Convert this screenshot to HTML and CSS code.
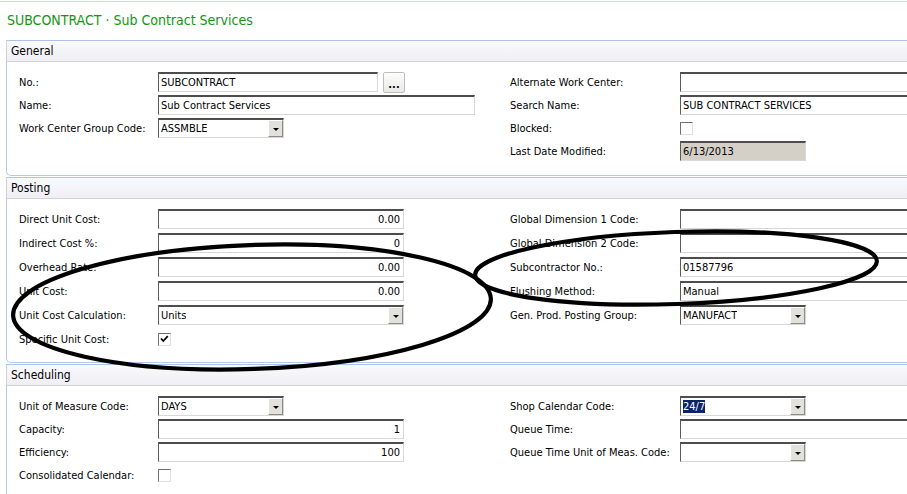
FILE: index.html
```html
<!DOCTYPE html>
<html>
<head>
<meta charset="utf-8">
<title>SUBCONTRACT · Sub Contract Services</title>
<link rel="stylesheet" href="styles.css">
</head>
<body>
<div class="page">
  <div class="topline"></div>
  <h1 class="title">SUBCONTRACT · Sub Contract Services</h1>

  <section class="fasttab general">
    <div class="tab-head">General</div>
    <div class="tab-body">
      <div class="col">
        <label>No.:</label>
        <div class="field"><span class="input w220">SUBCONTRACT</span><span class="assist">...</span></div>
        <label>Name:</label>
        <span class="input w317">Sub Contract Services</span>
        <label>Work Center Group Code:</label>
        <span class="input select w126"><span class="val">ASSMBLE</span><span class="drop"></span></span>
      </div>
      <div class="col col-right">
        <label>Alternate Work Center:</label>
        <span class="input wide"></span>
        <label>Search Name:</label>
        <span class="input wide">SUB CONTRACT SERVICES</span>
        <label>Blocked:</label>
        <span class="check"></span>
        <label>Last Date Modified:</label>
        <span class="input readonly w126">6/13/2013</span>
      </div>
    </div>
  </section>

  <section class="fasttab posting">
    <div class="tab-head">Posting</div>
    <div class="tab-body">
      <div class="col">
        <label>Direct Unit Cost:</label>
        <span class="input num w246">0.00</span>
        <label>Indirect Cost %:</label>
        <span class="input num w246">0</span>
        <label>Overhead Rate:</label>
        <span class="input num w246">0.00</span>
        <label>Unit Cost:</label>
        <span class="input num w246">0.00</span>
        <label>Unit Cost Calculation:</label>
        <span class="input select w246"><span class="val">Units</span><span class="drop"></span></span>
        <label>Specific Unit Cost:</label>
        <span class="check"><svg width="11" height="11" viewBox="0 0 11 11"><path d="M2 4.5 L4.3 7 L8.8 2.2" fill="none" stroke="#000" stroke-width="1.8"/></svg></span>
      </div>
      <div class="col col-right">
        <label>Global Dimension 1 Code:</label>
        <span class="input wide"></span>
        <label>Global Dimension 2 Code:</label>
        <span class="input wide"></span>
        <label>Subcontractor No.:</label>
        <span class="input wide">01587796</span>
        <label>Flushing Method:</label>
        <span class="input wide">Manual</span>
        <label>Gen. Prod. Posting Group:</label>
        <span class="input select w126"><span class="val">MANUFACT</span><span class="drop"></span></span>
      </div>
    </div>
  </section>

  <section class="fasttab scheduling">
    <div class="tab-head">Scheduling</div>
    <div class="tab-body">
      <div class="col">
        <label>Unit of Measure Code:</label>
        <span class="input select w126"><span class="val">DAYS</span><span class="drop"></span></span>
        <label>Capacity:</label>
        <span class="input num w246">1</span>
        <label>Efficiency:</label>
        <span class="input num w246">100</span>
        <label>Consolidated Calendar:</label>
        <span class="check"></span>
      </div>
      <div class="col col-right">
        <label>Shop Calendar Code:</label>
        <span class="input select w126"><span class="val"><span class="sel">24/7</span></span><span class="drop"></span></span>
        <label>Queue Time:</label>
        <span class="input wide"></span>
        <label>Queue Time Unit of Meas. Code:</label>
        <span class="input select w126"><span class="val"></span><span class="drop"></span></span>
      </div>
    </div>
  </section>

  <svg class="marks" width="907" height="494" viewBox="0 0 907 494">
    <ellipse cx="252" cy="307" rx="239" ry="62" transform="rotate(-2 252 307)" fill="none" stroke="#000" stroke-width="4.2"/>
    <ellipse cx="676" cy="268" rx="201" ry="36" transform="rotate(-2 676 268)" fill="none" stroke="#000" stroke-width="4.2"/>
  </svg>
</div>
</body>
</html>
```

FILE: styles.css
```css
html, body {
  margin: 0;
  padding: 0;
  background: #ffffff;
}
body {
  overflow: hidden;
  font-family: "DejaVu Sans Condensed", "DejaVu Sans", sans-serif;
  font-size: 11px;
  color: #000;
}
.page {
  position: relative;
  width: 907px;
  height: 494px;
  overflow: hidden;
}
.topline {
  height: 1px;
  margin-top: 1px;
  background: #c8d9f1;
}
.title {
  margin: 0;
  height: 38px;
  line-height: 37px;
  padding-left: 7px;
  font-size: 14px;
  font-weight: normal;
  color: #129612;
}
.fasttab {
  margin-left: 6px;
  margin-bottom: 1px;
}
.tab-head {
  box-sizing: border-box;
  height: 22px;
  line-height: 20px;
  padding-left: 4px;
  font-size: 12px;
  border: 1px solid #d2d2da;
  border-top-color: #a9c3ea;
  border-right: none;
  background: linear-gradient(#faf9fd, #efeef4);
}
.tab-body {
  box-sizing: border-box;
  display: flex;
  padding: 10px 0 0 12px;
  border-left: 1px solid #b3c8ea;
  border-bottom: 1px solid #b3c8ea;
  border-bottom-left-radius: 5px;
}
.general .tab-body { height: 114px; }
.posting .tab-body { height: 164px; }
.scheduling .tab-body { height: 120px; border-bottom: none; }

.col {
  display: grid;
  grid-template-columns: 139px max-content;
  grid-auto-rows: 20px;
  row-gap: 3px;
  align-items: center;
  width: 491px;
  flex: none;
}
.posting .col { row-gap: 4px; }
.col-right {
  flex: 1;
  width: auto;
  grid-template-columns: 170px 1fr;
  justify-items: start;
}
label {
  white-space: nowrap;
  padding-top: 1px;
}
.field {
  display: flex;
  align-items: center;
}
.input {
  box-sizing: border-box;
  display: block;
  height: 20px;
  line-height: 17px;
  padding: 0 2px;
  white-space: nowrap;
  overflow: hidden;
  background: #fff;
  border-style: solid;
  border-width: 2px 1px 1px 1px;
  border-color: #4d4d4d #d8d8d8 #d8d8d8 #5a5a5a;
}
.num { text-align: right; padding-right: 3px; }
.readonly { background: #d4d0c8; }
.w126 { width: 126px; }
.w220 { width: 220px; }
.w246 { width: 246px; }
.w317 { width: 317px; }
.wide {
  justify-self: stretch;
  border-right: none;
}
.select {
  display: flex;
  justify-content: space-between;
  padding-right: 0;
}
.val { overflow: hidden; }
.sel {
  background: #0a246a;
  color: #fff;
}
.drop {
  box-sizing: border-box;
  flex: none;
  width: 15px;
  height: 17px;
  display: flex;
  align-items: center;
  justify-content: center;
  background: #e3e1db;
  border: 1px solid;
  border-color: #ffffff #8a8a8a #8a8a8a #ffffff;
}
.drop::after {
  content: "";
  margin-top: 2px;
  border-left: 3px solid transparent;
  border-right: 3px solid transparent;
  border-top: 3px solid #000;
}
.assist {
  box-sizing: border-box;
  display: flex;
  align-items: flex-end;
  justify-content: center;
  width: 22px;
  height: 21px;
  margin-left: 5px;
  padding-bottom: 3px;
  border: 1px solid #bdbdbd;
  border-radius: 2px;
  background: linear-gradient(#fdfdfd, #e9e9e5);
  font-weight: bold;
  font-size: 11px;
  line-height: 8px;
}
.check {
  box-sizing: border-box;
  display: flex;
  align-items: center;
  justify-content: center;
  width: 13px;
  height: 13px;
  background: #fff;
  border: 1px solid;
  border-color: #6f6f6f #e0e0e0 #e0e0e0 #6f6f6f;
}
.marks {
  position: absolute;
  left: 0;
  top: 0;
  pointer-events: none;
}
```
